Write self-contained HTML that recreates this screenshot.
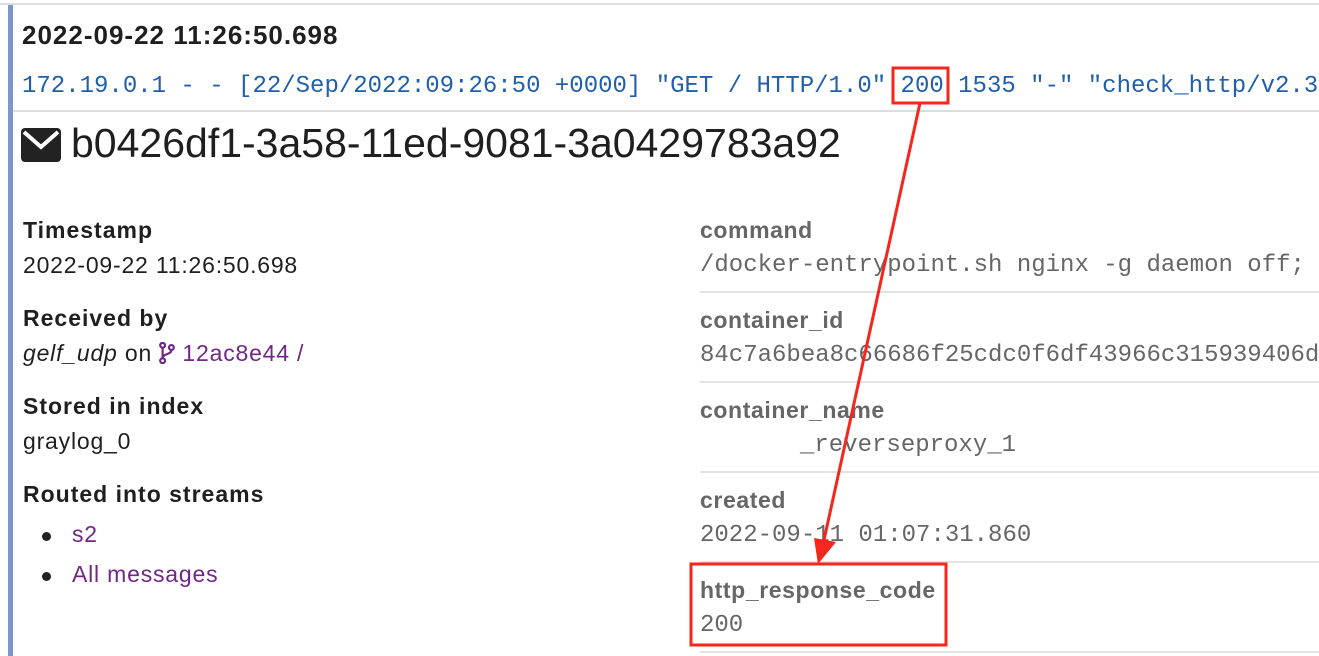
<!DOCTYPE html>
<html><head><meta charset="utf-8"><style>
body{margin:0;width:1319px;height:656px;background:#fff;overflow:hidden;position:relative;font-family:"Liberation Sans",sans-serif;color:#1f1f1f}
.a{position:absolute;white-space:nowrap}
.mono{font-family:"Liberation Mono",monospace;font-size:24px}
.lbl{font-weight:bold;font-size:23px;letter-spacing:1px}
.val{font-size:23px;letter-spacing:0.8px}
.rl{font-weight:bold;font-size:23px;letter-spacing:0.6px;color:#666}
.rv{font-family:"Liberation Mono",monospace;font-size:24px;color:#666}
.hr{position:absolute;left:700px;right:0;height:2px;background:#e3e3e3}
.p{color:#702785}
</style></head><body>
<div class="a" style="left:0;top:3px;width:1319px;height:2px;background:#ddd"></div>
<div class="a" style="left:8px;top:5px;width:5px;height:651px;background:#7b97cc"></div>
<div class="a" style="left:22px;top:20px;font-size:26px;font-weight:bold;letter-spacing:1px">2022-09-22 11:26:50.698</div>
<div class="a mono" style="left:22px;top:73px;color:#1f5fad">172.19.0.1 - - [22/Sep/2022:09:26:50 +0000] "GET / HTTP/1.0" 200 1535 "-" "check_http/v2.3</div>
<div class="a" style="left:13px;top:110px;width:1306px;height:2px;background:#ddd"></div>
<svg class="a" style="left:21px;top:128px" width="40" height="34" viewBox="0 0 40 34"><rect x="0" y="0" width="40" height="34" rx="4" fill="#222"/><path d="M3 4 L20 19 L37 4" stroke="#fff" stroke-width="4" fill="none"/></svg>
<div class="a" style="left:71px;top:120px;font-size:41px">b0426df1-3a58-11ed-9081-3a0429783a92</div>

<div class="a lbl" style="left:23px;top:217px">Timestamp</div>
<div class="a val" style="left:23px;top:252px">2022-09-22 11:26:50.698</div>
<div class="a lbl" style="left:23px;top:305px">Received by</div>
<div class="a val" style="left:23px;top:340px"><i>gelf_udp</i> on <span class="p"><svg width="16" height="22" viewBox="0 0 14 20" style="vertical-align:-3px"><circle cx="3" cy="3" r="2.2" fill="none" stroke="#702785" stroke-width="2"/><circle cx="11" cy="5" r="2.2" fill="none" stroke="#702785" stroke-width="2"/><circle cx="3" cy="17" r="2.2" fill="none" stroke="#702785" stroke-width="2"/><path d="M3 5V15M11 7C11 12 3 10 3 15" stroke="#702785" stroke-width="2" fill="none"/></svg> 12ac8e44 /</span></div>
<div class="a lbl" style="left:23px;top:393px">Stored in index</div>
<div class="a val" style="left:23px;top:428px">graylog_0</div>
<div class="a lbl" style="left:23px;top:481px">Routed into streams</div>
<div class="a val p" style="left:72px;top:521px">s2</div>
<div class="a val p" style="left:72px;top:561px">All messages</div>
<div class="a" style="left:42px;top:532px;width:9px;height:9px;border-radius:50%;background:#222"></div>
<div class="a" style="left:42px;top:572px;width:9px;height:9px;border-radius:50%;background:#222"></div>

<div class="a rl" style="left:700px;top:217px">command</div>
<div class="a rv" style="left:700px;top:252px">/docker-entrypoint.sh nginx -g daemon off;</div>
<div class="hr" style="top:291px"></div>
<div class="a rl" style="left:700px;top:307px">container_id</div>
<div class="a rv" style="left:700px;top:342px">84c7a6bea8c66686f25cdc0f6df43966c315939406d</div>
<div class="hr" style="top:381px"></div>
<div class="a rl" style="left:700px;top:397px">container_name</div>
<div class="a rv" style="left:800px;top:432px">_reverseproxy_1</div>
<div class="hr" style="top:471px"></div>
<div class="a rl" style="left:700px;top:487px">created</div>
<div class="a rv" style="left:700px;top:522px">2022-09-11 01:07:31.860</div>
<div class="hr" style="top:561px"></div>
<div class="a rl" style="left:700px;top:577px">http_response_code</div>
<div class="a rv" style="left:700px;top:612px">200</div>
<div class="hr" style="top:651px"></div>

<svg class="a" style="left:0;top:0" width="1319" height="656">
<rect x="893" y="68" width="55" height="35" fill="none" stroke="#f5261b" stroke-width="3"/>
<rect x="691" y="564" width="255" height="81" fill="none" stroke="#f5261b" stroke-width="3"/>
<line x1="920" y1="103" x2="824" y2="540" stroke="#f5261b" stroke-width="3"/>
<polygon points="814,538 836,542 818,564" fill="#f5261b"/>
</svg>
</body></html>
